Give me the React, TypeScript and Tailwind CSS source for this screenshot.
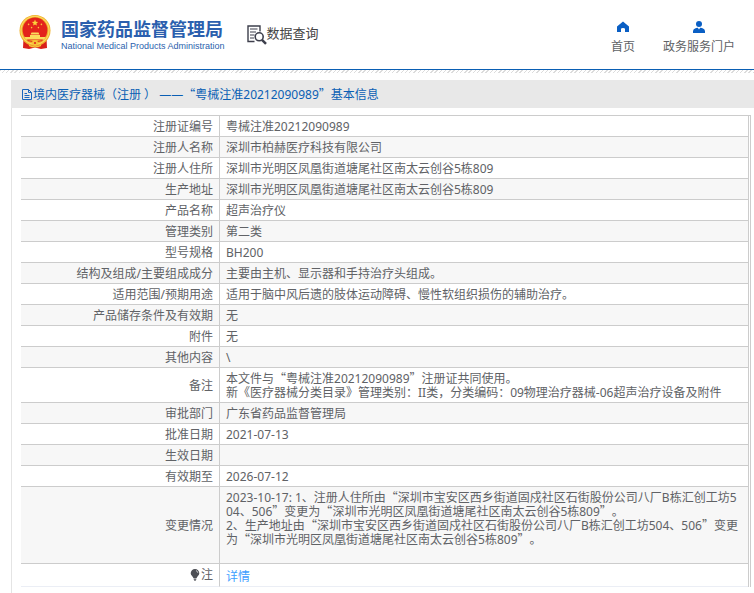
import React from "react";

type InfoRow = {
  label: string;
  lines: string[];
};

const rows: InfoRow[] = [
  { label: "注册证编号", lines: ["粤械注准20212090989"] },
  { label: "注册人名称", lines: ["深圳市柏赫医疗科技有限公司"] },
  { label: "注册人住所", lines: ["深圳市光明区凤凰街道塘尾社区南太云创谷5栋809"] },
  { label: "生产地址", lines: ["深圳市光明区凤凰街道塘尾社区南太云创谷5栋809"] },
  { label: "产品名称", lines: ["超声治疗仪"] },
  { label: "管理类别", lines: ["第二类"] },
  { label: "型号规格", lines: ["BH200"] },
  { label: "结构及组成/主要组成成分", lines: ["主要由主机、显示器和手持治疗头组成。"] },
  { label: "适用范围/预期用途", lines: ["适用于脑中风后遗的肢体运动障碍、慢性软组织损伤的辅助治疗。"] },
  { label: "产品储存条件及有效期", lines: ["无"] },
  { label: "附件", lines: ["无"] },
  { label: "其他内容", lines: ["\\"] },
  {
    label: "备注",
    lines: [
      "本文件与“粤械注准20212090989”注册证共同使用。",
      "新《医疗器械分类目录》管理类别：II类，分类编码：09物理治疗器械-06超声治疗设备及附件",
    ],
  },
  { label: "审批部门", lines: ["广东省药品监督管理局"] },
  { label: "批准日期", lines: ["2021-07-13"] },
  { label: "生效日期", lines: [""] },
  { label: "有效期至", lines: ["2026-07-12"] },
  {
    label: "变更情况",
    lines: [
      "2023-10-17: 1、注册人住所由“深圳市宝安区西乡街道固戍社区石街股份公司八厂B栋汇创工坊504、506”变更为“深圳市光明区凤凰街道塘尾社区南太云创谷5栋809”。",
      "2、生产地址由“深圳市宝安区西乡街道固戍社区石街股份公司八厂B栋汇创工坊504、506”变更为“深圳市光明区凤凰街道塘尾社区南太云创谷5栋809”。",
      "",
    ],
  },
];

// Curly quotes take the Chinese face so that they are full width
function MixedText({ text }: { text: string }) {
  return (
    <>
      {text.split(/([“”])/).map((part, i) =>
        part === "“" || part === "”" ? (
          <span key={i} className="font-['Noto_Sans_CJK_SC',sans-serif] leading-[0]">
            {part}
          </span>
        ) : (
          part
        )
      )}
    </>
  );
}

function Emblem() {
  return (
    <svg viewBox="0 0 32 34" className="h-[34px] w-8 shrink-0" aria-hidden="true">
      <path d="M4.5 23 L4 33 L10 34 L16 32.5 L22 34 L28 33 L27.5 23 Z" fill="#d9201a" />
      <circle cx="16" cy="15.5" r="15.5" fill="#f0b02a" />
      <circle cx="16" cy="15.3" r="14" fill="none" stroke="#fbd860" strokeWidth="1.2" />
      <circle cx="16" cy="15" r="12.4" fill="#e3231b" />
      <path
        d="M16 4.6 l.9 2.1 2.2.2 -1.7 1.5 .5 2.2 -1.9-1.2 -1.9 1.2 .5-2.2 -1.7-1.5 2.2-.2z"
        fill="#fbd23c"
      />
      <circle cx="9.6" cy="9.4" r="0.8" fill="#fbc23c" />
      <circle cx="22.4" cy="9.4" r="0.8" fill="#fbc23c" />
      <circle cx="12.6" cy="12.6" r="0.8" fill="#fbc23c" />
      <circle cx="19.4" cy="12.6" r="0.8" fill="#fbc23c" />
      <path d="M12.5 17.6 H19.5 L20.4 19.4 H11.6 Z M11 20 H21 V22 H26.6 L25.2 24.4 H6.8 L5.4 22 H11 Z" fill="#fbdc5c" />
      <path d="M7.5 25 H24.5 Q21 28.4 16 28.4 Q11 28.4 7.5 25 Z" fill="#f2b62c" />
      <path d="M8.5 25.6 L13.5 26.4 M23.5 25.6 L18.5 26.4" stroke="#e3231b" strokeWidth="1" />
      <circle cx="16" cy="28" r="2.8" fill="#f6c43a" />
      <circle cx="16" cy="28" r="1.1" fill="#e3231b" />
      <path d="M10 30.4 Q16 33.4 22 30.4" fill="none" stroke="#f6c43a" strokeWidth="1.2" />
    </svg>
  );
}

function QueryIcon() {
  return (
    <svg viewBox="0 0 20 20" className="h-5 w-5 shrink-0" fill="none" stroke="#3d3f4c" aria-hidden="true">
      <path d="M13 6.5 V1 H1 V16.5 H7.5" strokeWidth="1.4" />
      <path d="M3 4 H10.5 M3 7 H9 M3 10 H7.5 M3 13 H7" strokeWidth="1.2" />
      <circle cx="12.2" cy="11.8" r="4" strokeWidth="1.6" />
      <path d="M15 14.8 L19 18.8" strokeWidth="2.4" />
    </svg>
  );
}

function HomeIcon() {
  return (
    <svg viewBox="0 0 12 12" className="h-3 w-3" fill="#0a5fc4" aria-hidden="true">
      <path d="M6 0.5 L12 5.5 V11 H8 V8 Q8 7 6 7 Q4 7 4 8 V11 H0 V5.5 Z" />
    </svg>
  );
}

function UserIcon() {
  return (
    <svg viewBox="0 0 12 12" className="h-3 w-3" fill="#0a5fc4" aria-hidden="true">
      <circle cx="6" cy="3" r="3" />
      <path d="M0 12 V10 Q0 8 3 7 L4.8 6.8 L6 8.6 L7.2 6.8 L9 7 Q12 8 12 10 V12 Z" />
    </svg>
  );
}

function DocIcon() {
  return (
    <svg viewBox="0 0 11 12" className="h-3 w-[11px] shrink-0" fill="none" stroke="#1a66bd" aria-hidden="true">
      <path d="M0.5 0.5 H6.5 L9.5 3.5 V10.5 H0.5 Z M6.5 0.5 V3.5 H9.5" />
      <path d="M2.5 4.5 H5 M2.5 6.5 H7.5 M2.5 8.5 H7.5" />
    </svg>
  );
}

function BulbIcon() {
  return (
    <svg viewBox="0 0 11 12" className="h-3 w-[11px] shrink-0" fill="#4d4f55" aria-hidden="true">
      <path d="M5 0 A4.3 4.3 0 0 1 9.3 4.3 C9.3 6.5 7 7.5 6.6 9 H3.4 C3 7.5 0.7 6.5 0.7 4.3 A4.3 4.3 0 0 1 5 0 Z" />
      <path d="M3.6 9.5 H6.4 V10.5 H5.6 V12 H4.4 V10.5 H3.6 Z" />
      <path d="M6 1.6 Q7.6 2.2 7.8 3.8" fill="none" stroke="#fff" strokeWidth="0.7" />
    </svg>
  );
}

export default function App() {
  return (
    <div className="min-h-screen bg-white font-['Noto_Sans','Noto_Sans_CJK_SC',sans-serif] text-xs text-[#606266] [text-spacing-trim:space-all]">
      <header className="flex items-start justify-between border-b border-[#0a5fb4] pt-[15px] pr-[19px] pb-[14px] pl-[19px]">
        <div className="flex items-start">
          <Emblem />
          <div className="ml-[10px] text-[#2b5fae]">
            <p className="pt-1 text-lg leading-5 font-bold whitespace-nowrap">国家药品监督管理局</p>
            <p className="font-['Liberation_Sans',sans-serif] text-[9px] leading-[14px] whitespace-nowrap">
              National Medical Products Administration
            </p>
          </div>
          <div className="ml-[22px] flex items-start pt-[10px] text-[#444]">
            <QueryIcon />
            <span className="text-[13px] leading-4 whitespace-nowrap">数据查询</span>
          </div>
        </div>
        <nav className="flex gap-7 pt-[6px]">
          <a href="#" className="flex flex-col items-center gap-[6px] leading-4 whitespace-nowrap">
            <HomeIcon />
            首页
          </a>
          <a href="#" className="flex flex-col items-center gap-[6px] leading-4 whitespace-nowrap">
            <UserIcon />
            政务服务门户
          </a>
        </nav>
      </header>
      <div className="h-[3px] bg-[repeating-linear-gradient(135deg,#dcdcdc_0px,#dcdcdc_1px,#fff_1px,#fff_3px)]" />

      <main className="mt-[7px] ml-[11px]">
        <h1 className="flex h-7 items-center bg-[#e8e8e8] pt-[2px] pl-[11px] text-[#0a5fb4]">
          <DocIcon />
          <span>
            <MixedText text="境内医疗器械（注册 ） ——“粤械注准20212090989”基本信息" />
          </span>
        </h1>

        <div className="border-l border-[#e4e4e4] pt-[7px] pr-[3px] pb-[7px] pl-[9px]">
          <div className="border-t border-r border-[#ccc] pr-px">
            <table className="w-full table-fixed border-separate border-spacing-0 border-r border-[#ccc] leading-[14px]">
              <colgroup>
                <col className="w-[199px]" />
                <col />
              </colgroup>
              <tbody>
                {rows.map((row) => (
                  <tr key={row.label} className="even:bg-[#f7f7f7]">
                    <th scope="row" className="border-r border-b border-[#ccc] px-[6px] pt-1 pb-[2px] text-right font-normal">
                      {row.label}
                    </th>
                    <td className="border-b border-[#ccc] px-[6px] pt-1 pb-[2px] break-all">
                      {row.lines.map((line, i) => (
                        <p key={i} className="min-h-[14px]">
                          <MixedText text={line} />
                        </p>
                      ))}
                    </td>
                  </tr>
                ))}
                <tr>
                  <th scope="row" className="border-r border-b border-r-[#ccc] border-b-[#ebeef5] px-[6px] py-1 font-normal">
                    <span className="flex items-center justify-end">
                      <BulbIcon />
                      注
                    </span>
                  </th>
                  <td className="border-b border-[#ebeef5] px-[6px] pt-[6px] pb-[2px]">
                    <a href="#" className="text-[#409eff]">
                      详情
                    </a>
                  </td>
                </tr>
              </tbody>
            </table>
          </div>
        </div>
      </main>
    </div>
  );
}
